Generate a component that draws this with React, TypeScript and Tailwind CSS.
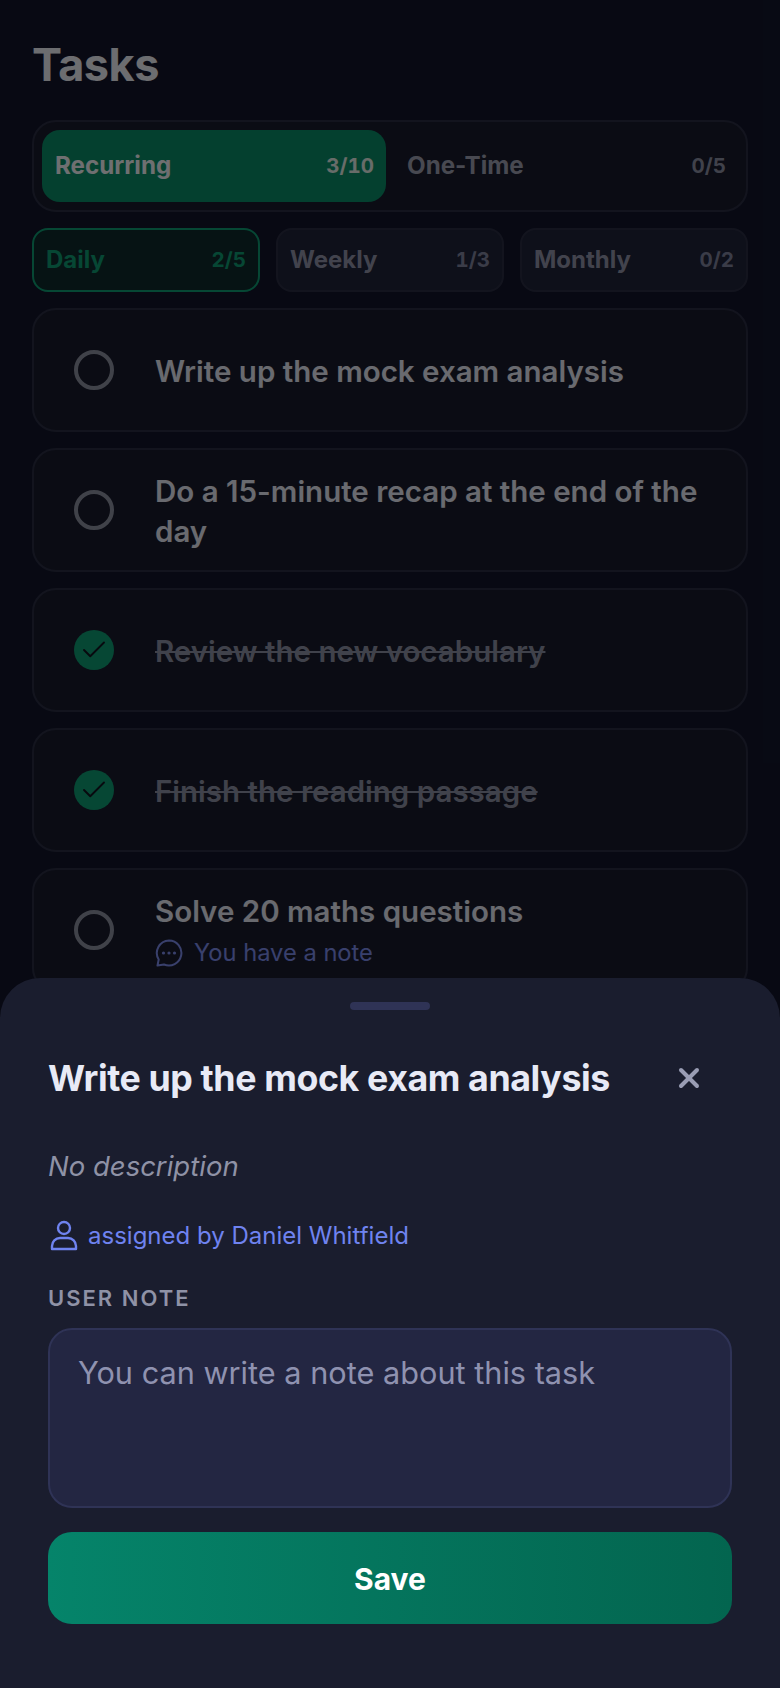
import { Check, X } from "lucide-react"

const tasks = [
  { title: "Write up the mock exam analysis", done: false },
  { title: "Do a 15-minute recap at the end of the day", done: false },
  { title: "Review the new vocabulary", done: true },
  { title: "Finish the reading passage", done: true },
  { title: "Solve 20 maths questions", done: false, note: "You have a note" },
]

const subTabs = [
  { label: "Daily", count: "2/5", active: true },
  { label: "Weekly", count: "1/3", active: false },
  { label: "Monthly", count: "0/2", active: false },
]

function NoteIcon() {
  return (
    <svg className="h-[28px] w-[28px] shrink-0" viewBox="0 0 28 28" fill="none" stroke="currentColor" strokeWidth={2}>
      <path strokeLinejoin="round" d="M14 1.5a12.5 12.5 0 1 1-5 24L2.5 26.5l1.2-6A12.5 12.5 0 0 1 14 1.5z" />
      <circle cx="8.5" cy="14" r="1.6" fill="currentColor" stroke="none" />
      <circle cx="14" cy="14" r="1.6" fill="currentColor" stroke="none" />
      <circle cx="19.5" cy="14" r="1.6" fill="currentColor" stroke="none" />
    </svg>
  )
}

function TaskCard({ title, done, note }: { title: string; done: boolean; note?: string }) {
  return (
    <div className="flex h-[124px] shrink-0 items-center rounded-[24px] border-2 border-[#2b2e44] bg-[#191c2d] pl-[40px] pr-[36px]">
      {done ? (
        <div className="flex h-10 w-10 shrink-0 items-center justify-center rounded-full bg-[#0f9d74]">
          <Check className="h-[30px] w-[30px] text-[#10141f]" strokeWidth={1.5} />
        </div>
      ) : (
        <div className="h-10 w-10 shrink-0 rounded-full border-4 border-[#8f93a3]" />
      )}
      <div className={`ml-[41px] min-w-0 ${note ? "" : "pt-[2px]"}`}>
        <div
          className={`text-[29.5px] font-semibold leading-[40px] ${
            done ? "text-[#8f92a6] line-through" : "text-[#e8eaf6]"
          }`}
        >
          {title}
        </div>
        {note && (
          <div className="mt-[6px] flex items-center gap-[11px] text-[23.7px] leading-[32px] text-[#7f8ff0]">
            <NoteIcon />
            {note}
          </div>
        )}
      </div>
    </div>
  )
}

export default function App() {
  return (
    <div className="relative h-[1688px] w-[780px] overflow-hidden bg-[#12162c] font-['Inter',sans-serif]">
      <div className="flex flex-col px-8 pt-[38px]">
        <h1 className="text-[45px] font-bold leading-[54px] tracking-[-0.5px] text-[#f0f1f8]">Tasks</h1>

        <div className="mt-[28px] flex h-[92px] items-center rounded-[24px] border-2 border-[#2b2e44] bg-[#191c2d] pl-[8px]">
          <div className="flex h-[72px] w-[344px] items-center justify-between rounded-[18px] bg-[#0a8f69] pl-[13px] pr-[12px]">
            <span className="text-[24.2px] font-bold text-[#f5f7fa]">Recurring</span>
            <span className="text-[20.5px] font-bold tabular-nums text-[#e6efe9]">3/10</span>
          </div>
          <div className="ml-[8px] flex h-[72px] w-[344px] items-center justify-between pl-[13px] pr-[12px]">
            <span className="text-[24.2px] font-bold text-[#9fa2b3]">One-Time</span>
            <span className="text-[20.5px] font-bold tabular-nums text-[#8f92a6]">0/5</span>
          </div>
        </div>

        <div className="mt-[16px] flex gap-4">
          {subTabs.map((t) => (
            <div
              key={t.label}
              className={`flex h-[64px] flex-1 items-center justify-between rounded-[16px] border-2 px-[12px] ${
                t.active ? "border-[#0f9d74] bg-[#0e2c2d]" : "border-[#2b2e44] bg-[#20243a]"
              }`}
            >
              <span className={`text-[24px] font-bold ${t.active ? "text-[#0f9d74]" : "text-[#9296ab]"}`}>
                {t.label}
              </span>
              <span className={`text-[20.5px] font-bold tabular-nums ${t.active ? "text-[#0f9d74]" : "text-[#8286a0]"}`}>
                {t.count}
              </span>
            </div>
          ))}
        </div>

        <div className="mt-[16px] flex flex-col gap-[16px]">
          {tasks.map((t) => (
            <TaskCard key={t.title} title={t.title} done={t.done} note={t.note} />
          ))}
        </div>
      </div>

      {/* dim layer behind the sheet */}
      <div className="absolute inset-0 bg-black/55" />

      <div className="absolute inset-x-0 bottom-0 flex h-[710px] flex-col rounded-t-[40px] bg-[#1a1d2e] px-12">
        <div className="mx-auto mt-6 h-2 w-20 rounded-full bg-[#2f3356]" />
        <div className="mt-[44px] flex items-center justify-between">
          <h2 className="text-[35.75px] font-bold leading-[48px] tracking-[-0.4px] text-[#e8eaf6]">
            Write up the mock exam analysis
          </h2>
          <X className="mr-[27px] h-8 w-8 shrink-0 text-[#9a9db4]" strokeWidth={3} />
        </div>
        <p className="mt-[46px] text-[27.5px] italic leading-[36px] text-[#8f92a6]">No description</p>
        <div className="mt-[34px] flex items-center gap-[6px] text-[24px] leading-[36px] text-[#6f83f0]">
          <svg className="-ml-[2px] h-9 w-9" viewBox="0 0 36 36" fill="none" stroke="currentColor" strokeWidth={2.4} strokeLinejoin="round">
            <circle cx="18" cy="10" r="6" />
            <path d="M6 31v-3a8 8 0 0 1 8-8h8a8 8 0 0 1 8 8v3z" />
          </svg>
          assigned by Daniel Whitfield
        </div>
        <div className="mt-[30px] text-[22px] font-semibold leading-[28px] tracking-[2px] text-[#8f92a6]">
          USER NOTE
        </div>
        <div className="mt-[16px] h-[180px] rounded-[24px] border-2 border-[#2f3356] bg-[#232642] px-[28px] pt-[21px] text-[30.7px] leading-[44px] text-[#8f92b0]">
          You can write a note about this task
        </div>
        <div className="mt-[24px] flex h-[92px] items-center justify-center rounded-[24px] bg-gradient-to-r from-[#05846a] to-[#03654f] pt-[2px] text-[30px] font-bold text-white">
          Save
        </div>
      </div>
    </div>
  )
}
